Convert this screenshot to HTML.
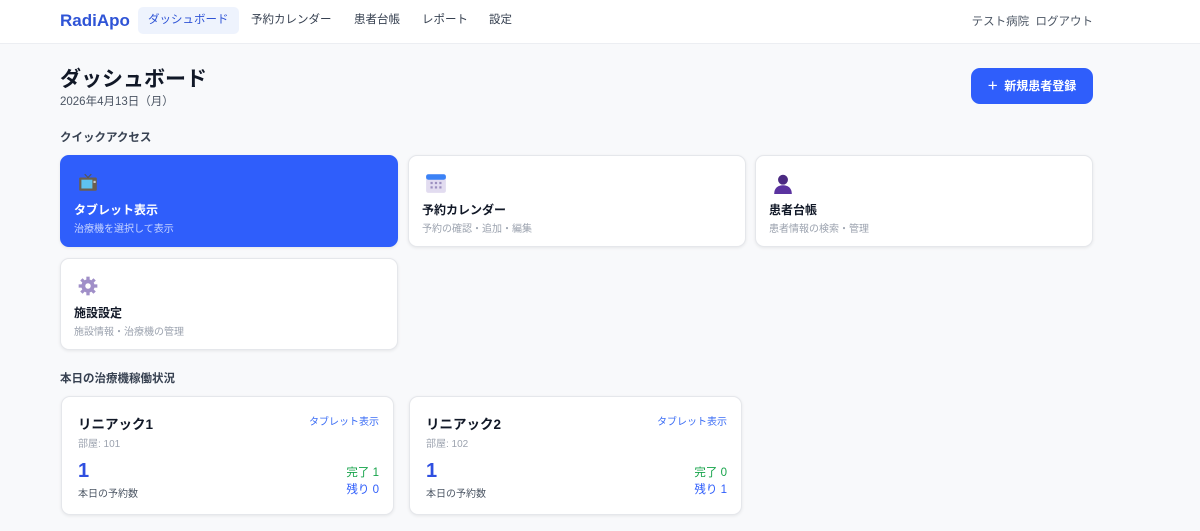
<!DOCTYPE html>
<html><head><meta charset="utf-8"><style>
*{box-sizing:border-box;margin:0;padding:0}
body{width:1200px;height:531px;overflow:hidden;background:#f8f9fb;font-family:"Liberation Sans","Noto Sans CJK JP",sans-serif;color:#1f2937}
.nav{height:44px;background:#fff;border-bottom:1px solid #eceef2;position:relative}
.logo{position:absolute;left:60px;top:11px;font-size:17px;font-weight:bold;color:#2f54d6}
.tab{position:absolute;top:7px;height:27px;line-height:27px;font-size:11.5px;color:#374151;padding:0 10px}
.tab.on{background:#eef3fd;color:#2f54d6;border-radius:5px}
.right{position:absolute;right:107px;top:13px;font-size:11.5px;color:#4b5563}
h1{position:absolute;left:60px;top:63px;font-size:21px;font-weight:bold;color:#111827}
.date{position:absolute;left:60px;top:93px;font-size:11.5px;color:#4b5563}
.btn{position:absolute;left:971px;top:68px;width:122px;height:36px;background:#2f5efb;border-radius:9px;color:#fff;font-size:12px;font-weight:bold;line-height:36px;text-align:center}
.sec{position:absolute;left:60px;font-size:11.5px;font-weight:bold;color:#374151}
.card{position:absolute;background:#fff;border:1px solid #e5e7eb;border-radius:9px;box-shadow:0 1px 3px rgba(0,0,0,.08)}
.qa{height:92px;width:338px}
.qa .ic{position:absolute;left:16px;top:16px;width:22px;height:22px}
.qa .t{position:absolute;left:13px;top:45px;font-size:12px;font-weight:bold;color:#111827}
.qa .s{position:absolute;left:13px;top:64px;font-size:10px;color:#9ca3af}
.blue{background:#2f5efb;border-color:#2f5efb}
.blue .t{color:#fff}.blue .s{color:#c7d4ff}
.mc{width:333px;height:119px}
.mc .n{position:absolute;left:16px;top:16px;font-size:13.5px;font-weight:bold;color:#111827}
.mc .r{position:absolute;left:16px;top:38px;font-size:10px;color:#9ca3af}
.mc .l{position:absolute;right:14px;top:16px;font-size:10px;color:#3b6df5}
.mc .big{position:absolute;left:16px;top:63px;font-size:20px;font-weight:bold;color:#2f4fe0}
.mc .d{position:absolute;left:16px;top:88px;font-size:10px;color:#4b5563}
.mc .k{position:absolute;right:14px;top:67px;font-size:11.5px;color:#16a34a;text-align:right}
.mc .z{position:absolute;right:14px;top:84px;font-size:11.5px;color:#2f5efb;text-align:right}
</style></head><body>
<div class="nav">
<div class="logo">RadiApo</div>
<div class="tab on" style="left:138px">ダッシュボード</div>
<div class="tab" style="left:241px">予約カレンダー</div>
<div class="tab" style="left:344px">患者台帳</div>
<div class="tab" style="left:412px">レポート</div>
<div class="tab" style="left:479px">設定</div>
<div class="right">テスト病院&nbsp; ログアウト</div>
</div>
<h1>ダッシュボード</h1>
<div class="date">2026年4月13日（月）</div>
<div class="btn"><span style="font-size:17px;font-weight:normal;vertical-align:-1px">+</span>&nbsp; 新規患者登録</div>
<div class="sec" style="top:129px">クイックアクセス</div>
<div class="card qa blue" style="left:60px;top:155px"><svg class="ic" viewBox="0 0 20 20"><rect x="2" y="5" width="16" height="12" rx="1" fill="#6b5f4e"/><rect x="4" y="7" width="10" height="8" fill="#5ec3f0"/><rect x="15" y="8" width="2" height="2" fill="#ccc"/><path d="M7 2l3 3 3-3" stroke="#555" fill="none"/></svg><div class="t">タブレット表示</div><div class="s">治療機を選択して表示</div></div>
<div class="card qa" style="left:408px;top:155px"><svg class="ic" viewBox="0 0 20 20"><rect x="1" y="2" width="18" height="17" rx="2" fill="#e2dcf0"/><rect x="1" y="2" width="18" height="5" rx="2" fill="#3b82f6"/><g fill="#9c8fc0"><rect x="5" y="9" width="2" height="2"/><rect x="9" y="9" width="2" height="2"/><rect x="13" y="9" width="2" height="2"/><rect x="5" y="13" width="2" height="2"/><rect x="9" y="13" width="2" height="2"/><rect x="13" y="13" width="2" height="2"/></g></svg><div class="t">予約カレンダー</div><div class="s">予約の確認・追加・編集</div></div>
<div class="card qa" style="left:755px;top:155px"><svg class="ic" viewBox="0 0 20 20"><circle cx="10" cy="7" r="4.5" fill="#4b2a82"/><path d="M2 20c0-6 4-8 8-8s8 2 8 8z" fill="#5b33a0"/></svg><div class="t">患者台帳</div><div class="s">患者情報の検索・管理</div></div>
<div class="card qa" style="left:60px;top:258px"><svg class="ic" viewBox="0 0 20 20"><g fill="#a08fc8"><circle cx="10" cy="10" r="6"/><rect x="8.5" y="1.5" width="3" height="17"/><rect x="1.5" y="8.5" width="17" height="3"/><rect x="8.5" y="1.5" width="3" height="17" transform="rotate(45 10 10)"/><rect x="8.5" y="1.5" width="3" height="17" transform="rotate(-45 10 10)"/></g><circle cx="10" cy="10" r="2.5" fill="#fff"/></svg><div class="t">施設設定</div><div class="s">施設情報・治療機の管理</div></div>
<div class="sec" style="top:370px">本日の治療機稼働状況</div>
<div class="card mc" style="left:61px;top:396px"><div class="n">リニアック1</div><div class="r">部屋: 101</div><div class="l">タブレット表示</div><div class="big">1</div><div class="d">本日の予約数</div><div class="k">完了 1</div><div class="z">残り 0</div></div>
<div class="card mc" style="left:409px;top:396px"><div class="n">リニアック2</div><div class="r">部屋: 102</div><div class="l">タブレット表示</div><div class="big">1</div><div class="d">本日の予約数</div><div class="k">完了 0</div><div class="z">残り 1</div></div>
</body></html>
